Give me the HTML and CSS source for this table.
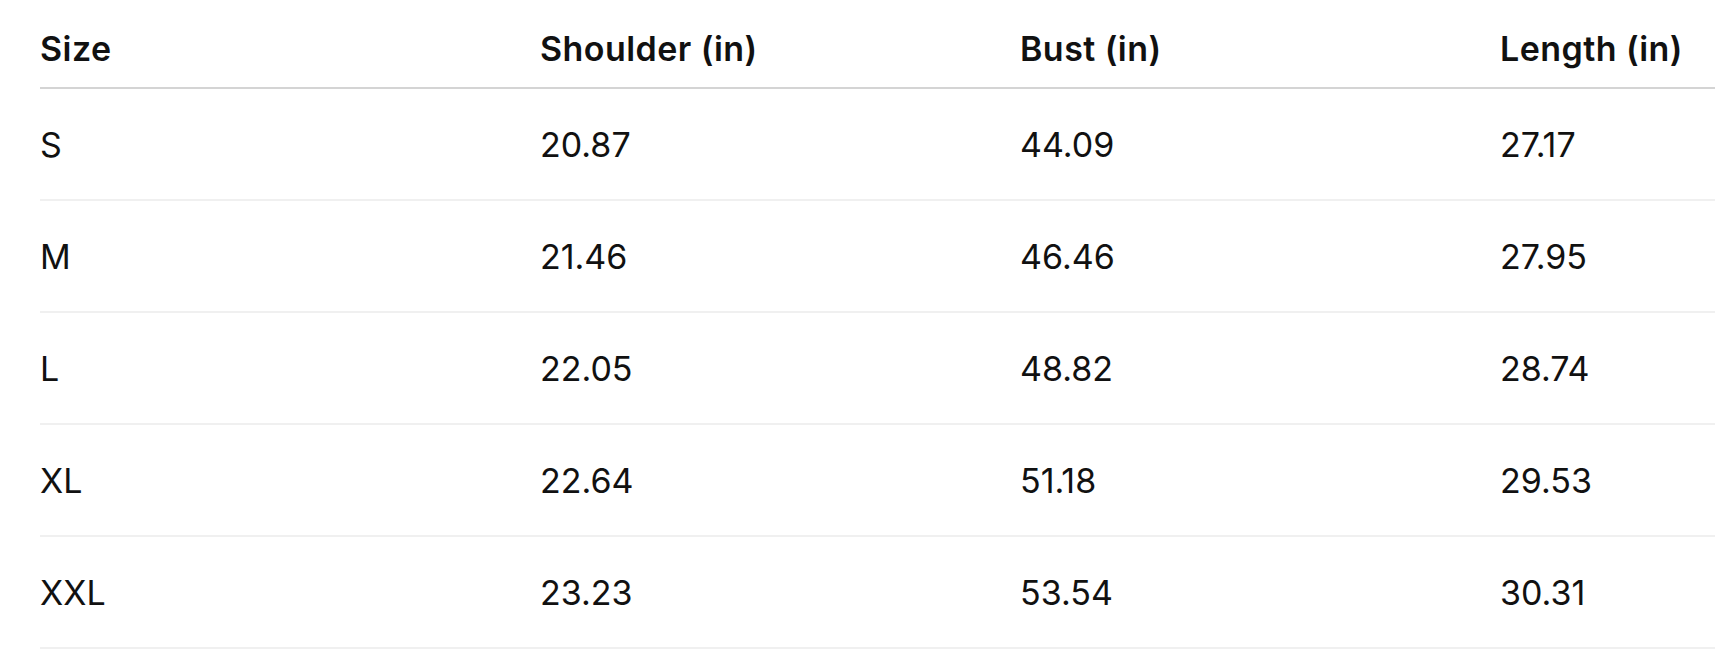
FILE: index.html
```html
<!DOCTYPE html>
<html lang="en">
<head>
<meta charset="utf-8">
<title>Size chart</title>
<link rel="stylesheet" href="styles.css">
</head>
<body>
<div class="wrap">
<table class="chart">
<colgroup>
<col class="c1"><col class="c2"><col class="c3"><col class="c4">
</colgroup>
<thead>
<tr><th>Size</th><th>Shoulder (in)</th><th>Bust (in)</th><th>Length (in)</th></tr>
</thead>
<tbody>
<tr><td>S</td><td>20.87</td><td>44.09</td><td>27.17</td></tr>
<tr><td>M</td><td>21.46</td><td>46.46</td><td>27.95</td></tr>
<tr><td>L</td><td>22.05</td><td>48.82</td><td>28.74</td></tr>
<tr><td>XL</td><td>22.64</td><td>51.18</td><td>29.53</td></tr>
<tr><td>XXL</td><td>23.23</td><td>53.54</td><td>30.31</td></tr>
</tbody>
</table>
</div>
</body>
</html>
```
FILE: styles.css
```css
html, body {
  margin: 0;
  padding: 0;
  background: #ffffff;
}
body {
  overflow: hidden;
  font-family: Inter, "Liberation Sans", sans-serif;
  color: #111111;
}
.wrap {
  padding-left: 40px;
}
.chart {
  border-collapse: collapse;
  table-layout: fixed;
  width: 1960px;
}
.c1 { width: 500px; }
.c2 { width: 480px; }
.c3 { width: 480px; }
.c4 { width: 500px; }
.chart th {
  text-align: left;
  font-weight: 600;
  font-size: 34px;
  letter-spacing: 0.45px;
  height: 77px;
  padding: 10px 0 0 0;
  vertical-align: middle;
  border-bottom: 2px solid #d4d4d4;
}
.chart td {
  font-size: 34px;
  font-weight: 400;
  height: 110px;
  padding: 0;
  vertical-align: middle;
  border-bottom: 2px solid #f0f0f0;
}
```
